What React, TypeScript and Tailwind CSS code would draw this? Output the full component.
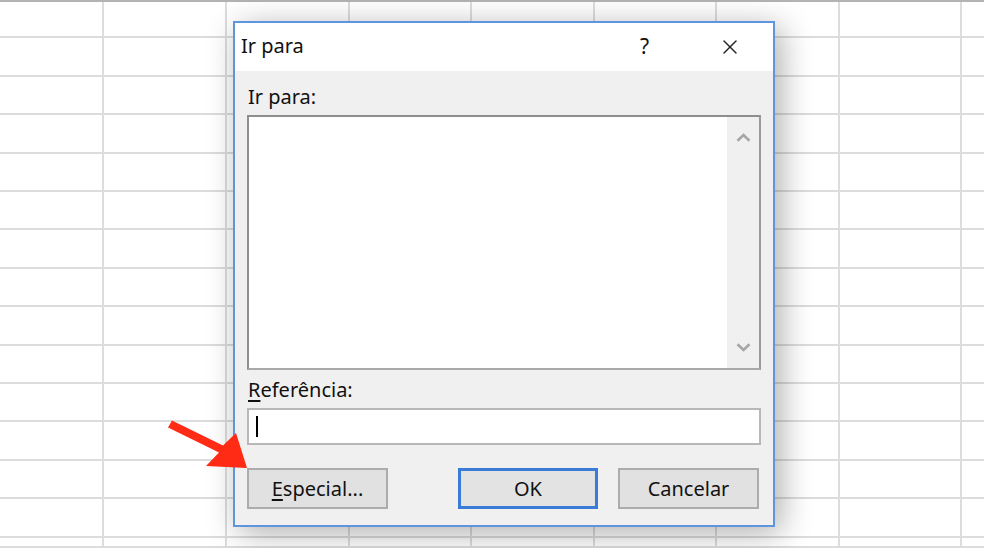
import { X } from 'lucide-react';

// column widths of the sheet behind the dialog
const cols = ['w-[104px]', 'w-[123px]', 'w-[123px]', 'w-[122px]', 'w-[123px]', 'w-[122px]', 'w-[123px]', 'w-[122px]', 'w-[22px]'];
const rows = ['h-[36px]', 'h-[39px]', 'h-[38px]', 'h-[39px]', 'h-[38px]', 'h-[38px]', 'h-[39px]', 'h-[38px]', 'h-[39px]', 'h-[38px]', 'h-[38px]', 'h-[39px]', 'h-[38px]', 'h-[39px]', 'h-[10px]'];

function Sheet() {
  return (
    <div className="border-t-2 border-[#b3b3b3]">
      {rows.map((r, i) => (
        <div key={i} className="flex">
          {cols.map((c, j) => (
            <div
              key={j}
              className={`${c} ${r} shrink-0 border-b-2 border-[#dcdcdc] ${j < cols.length - 1 ? 'border-r-2' : ''}`}
            />
          ))}
        </div>
      ))}
    </div>
  );
}

function Chevron({ up }: { up?: boolean }) {
  return (
    <svg width="15" height="9" viewBox="0 0 15 9" fill="none">
      <polyline
        points={up ? '1.5,7.8 7.5,2 13.5,7.8' : '1.5,1.2 7.5,7 13.5,1.2'}
        stroke="#a6a6a6"
        strokeWidth="2.6"
      />
    </svg>
  );
}

export default function App() {
  return (
    <div
      className="relative w-[984px] h-[548px] overflow-hidden bg-white"
      style={{ fontFamily: '"Noto Sans", "Open Sans", sans-serif' }}
    >
      <Sheet />

      {/* Ir para dialog */}
      <div className="absolute left-[233px] top-[21px] w-[542px] h-[506px] border-2 border-[#5e95dd] bg-[#f0f0f0] shadow-[6px_6px_30px_rgba(0,0,0,0.32)] flex flex-col text-[#111]">
        <div className="h-[48px] bg-white flex items-start pt-[11px] pl-[6px] shrink-0">
          <span className="text-[20px] leading-[24px]">Ir para</span>
          <span className="ml-auto mr-[69px] text-[21px] leading-[24px]">?</span>
          <X className="mr-[31px] mt-[1px]" size={24} strokeWidth={1.4} color="#222" />
        </div>

        <div className="flex flex-col px-[12px] pt-[14px]">
          <div className="text-[20px] leading-[24px] pl-[1px]">Ir para:</div>

          <div className="mt-[6px] h-[255px] bg-white border-2 border-[#8e8e8e] border-r-[#9a9a9a] border-b-[#a9a9a9] flex justify-end">
            <div className="w-[32px] bg-[#f0f0f0] flex flex-col items-center justify-between py-[16px]">
              <Chevron up />
              <Chevron />
            </div>
          </div>

          <div className="mt-[8px] text-[20px] leading-[24px] pl-[1px]">
            <span className="underline underline-offset-[3px] decoration-[1.5px]">R</span>eferência:
          </div>

          <div className="mt-[6px] h-[37px] bg-white border-2 border-[#b8b8b8] flex items-center">
            <div className="ml-[7px] w-[2px] h-[21px] bg-black" />
          </div>

          <div className="mt-[23px] flex items-center pr-[2px]">
            <button className="w-[141px] h-[41px] bg-[#e1e1e1] border-2 border-[#acacac] text-[20px] leading-[24px] text-[#111]">
              <span className="underline underline-offset-[3px] decoration-[1.5px]">E</span>special...
            </button>
            <button className="ml-auto w-[140px] h-[41px] bg-[#e3e3e3] border-[3px] border-[#3b7bd8] text-[20px] leading-[24px] text-[#111]">
              OK
            </button>
            <button className="ml-[20px] w-[141px] h-[41px] bg-[#e1e1e1] border-2 border-[#acacac] text-[20px] leading-[24px] text-[#111]">
              Cancelar
            </button>
          </div>
        </div>
      </div>

      {/* red pointer arrow */}
      <svg className="absolute left-0 top-0 pointer-events-none" width="984" height="548">
        <polygon
          points="172,420.5 223,445.5 236,433 247,468 206,466 219,452.5 168,427.5"
          fill="#ff2b14"
        />
      </svg>
    </div>
  );
}
